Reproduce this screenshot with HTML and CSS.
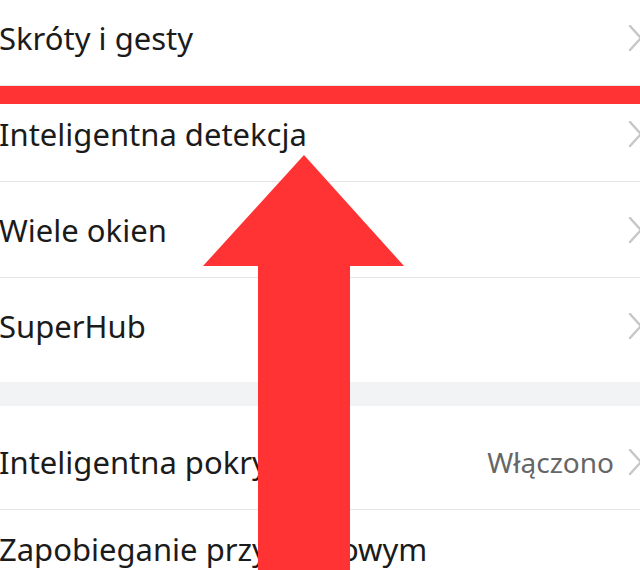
FILE: index.html
```html
<!DOCTYPE html>
<html lang="pl">
<head>
<meta charset="utf-8">
<title>Ustawienia</title>
<link rel="stylesheet" href="styles.css">
</head>
<body>
<div class="page">
  <div class="list">
    <div class="group">
      <div class="row"><span class="label">Skróty i gesty</span><svg class="chev" viewBox="0 0 14 26"><polyline points="2,1 13,13 2,25"/></svg></div>
      <div class="row"><span class="label">Inteligentna detekcja</span><svg class="chev" viewBox="0 0 14 26"><polyline points="2,1 13,13 2,25"/></svg></div>
      <div class="row"><span class="label">Wiele okien</span><svg class="chev" viewBox="0 0 14 26"><polyline points="2,1 13,13 2,25"/></svg></div>
      <div class="row last"><span class="label">SuperHub</span><svg class="chev" viewBox="0 0 14 26"><polyline points="2,1 13,13 2,25"/></svg></div>
    </div>
    <div class="gap"></div>
    <div class="group">
      <div class="row"><span class="label">Inteligentna pokrywa</span><span class="value">Włączono</span><svg class="chev" viewBox="0 0 14 26"><polyline points="2,1 13,13 2,25"/></svg></div>
      <div class="row tall"><span class="label">Zapobieganie przypadkowym dotknięciom</span><svg class="chev" viewBox="0 0 14 26"><polyline points="2,1 13,13 2,25"/></svg></div>
    </div>
  </div>
  <div class="redbar"></div>
  <svg class="arrow" viewBox="0 0 640 570" preserveAspectRatio="none">
    <polygon points="304,155 404,266 350,266 350,580 258,580 258,266 203,266"/>
  </svg>
</div>
</body>
</html>
```
FILE: styles.css
```css
* { box-sizing: border-box; }
html, body {
  margin: 0;
  padding: 0;
  background: #ffffff;
  overflow: hidden;
}
body {
  width: 640px;
  height: 570px;
  font-family: "Noto Sans", "Liberation Sans", sans-serif;
  color: #1b1b1b;
}
.page {
  position: relative;
  width: 640px;
  height: 570px;
  overflow: hidden;
}
.list {
  margin-top: -10px;
}
.group {
  background: #ffffff;
  padding: 0 0 8px 0;
}
.group + .gap + .group {
  padding-top: 8px;
}
.gap {
  height: 24px;
  background: #f1f3f5;
}
.row {
  display: flex;
  align-items: center;
  height: 96px;
  border-bottom: 1px solid #e6e6e6;
  padding-left: 0;
}
.row.last { border-bottom: none; }
.row.tall {
  height: 150px;
  border-bottom: none;
  align-items: flex-start;
  padding-top: 18px;
}
.row.tall .chev {
  align-self: center;
}
.label {
  flex: 1 1 auto;
  min-width: 0;
  font-size: 31px;
  line-height: 42px;
  margin-left: -1px;
  padding-right: 30px;
}
.value {
  flex: none;
  font-size: 28px;
  color: #666666;
  margin-right: 14px;
}
.chev {
  flex: none;
  width: 14px;
  height: 26px;
  margin-right: -2px;
  fill: none;
  stroke: #c6c6c6;
  stroke-width: 2.4;
  stroke-linecap: round;
  stroke-linejoin: round;
}
.redbar {
  position: absolute;
  left: 0;
  top: 86px;
  width: 640px;
  height: 18px;
  background: #ff3333;
}
.arrow {
  position: absolute;
  left: 0;
  top: 0;
  width: 640px;
  height: 570px;
  fill: #ff3333;
}
```
